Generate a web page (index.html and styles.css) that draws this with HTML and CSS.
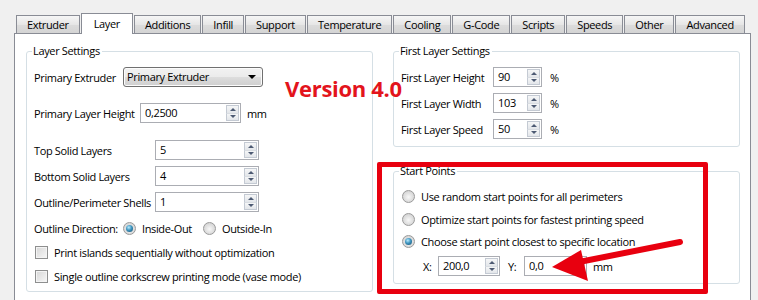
FILE: index.html
```html
<!DOCTYPE html>
<html>
<head>
<meta charset="utf-8">
<link rel="stylesheet" href="styles.css">
</head>
<body>
<div class="window">
  <div class="tabs">
    <div class="tab">Extruder</div>
    <div class="tab active">Layer</div>
    <div class="tab">Additions</div>
    <div class="tab">Infill</div>
    <div class="tab">Support</div>
    <div class="tab">Temperature</div>
    <div class="tab">Cooling</div>
    <div class="tab">G-Code</div>
    <div class="tab">Scripts</div>
    <div class="tab">Speeds</div>
    <div class="tab">Other</div>
    <div class="tab">Advanced</div>
  </div>
  <div class="pane">
    <fieldset class="group group-layer">
      <legend>Layer Settings</legend>
      <div class="row mt9">
        <span class="lbl lbl-extr">Primary Extruder</span>
        <div class="combo"><span class="combo-text">Primary Extruder</span><i class="caret"></i></div>
      </div>
      <div class="row mt16">
        <span class="lbl lbl-height">Primary Layer Height</span>
        <div class="spin w100"><span class="val">0,2500</span><span class="btns"><i class="up"></i><i class="dn"></i></span></div>
        <span class="unit">mm</span>
      </div>
      <div class="row mt17">
        <span class="lbl lbl-solid">Top Solid Layers</span>
        <div class="spin w103"><span class="val">5</span><span class="btns"><i class="up"></i><i class="dn"></i></span></div>
      </div>
      <div class="row mt6">
        <span class="lbl lbl-solid">Bottom Solid Layers</span>
        <div class="spin w103"><span class="val">4</span><span class="btns"><i class="up"></i><i class="dn"></i></span></div>
      </div>
      <div class="row mt6">
        <span class="lbl lbl-solid">Outline/Perimeter Shells</span>
        <div class="spin w103"><span class="val">1</span><span class="btns"><i class="up"></i><i class="dn"></i></span></div>
      </div>
      <div class="row mt6">
        <span class="lbl">Outline Direction:</span>
        <i class="radio checked dir-first"></i><span class="opt">Inside-Out</span>
        <i class="radio dir-second"></i><span class="opt">Outside-In</span>
      </div>
      <div class="row mt4">
        <i class="check"></i><span class="opt">Print islands sequentially without optimization</span>
      </div>
      <div class="row mt4">
        <i class="check"></i><span class="opt">Single outline corkscrew printing mode (vase mode)</span>
      </div>
    </fieldset>
    <div class="col-right">
      <fieldset class="group group-first">
        <legend>First Layer Settings</legend>
        <div class="row mt9">
          <span class="lbl lbl-first">First Layer Height</span>
          <div class="spin w48"><span class="val">90</span><span class="btns"><i class="up"></i><i class="dn"></i></span></div>
          <span class="unit pct">%</span>
        </div>
        <div class="row mt6">
          <span class="lbl lbl-first">First Layer Width</span>
          <div class="spin w48"><span class="val">103</span><span class="btns"><i class="up"></i><i class="dn"></i></span></div>
          <span class="unit pct">%</span>
        </div>
        <div class="row mt6">
          <span class="lbl lbl-first">First Layer Speed</span>
          <div class="spin w48"><span class="val">50</span><span class="btns"><i class="up"></i><i class="dn"></i></span></div>
          <span class="unit pct">%</span>
        </div>
      </fieldset>
      <fieldset class="group group-start">
        <legend>Start Points</legend>
        <div class="row mt8">
          <i class="radio sp"></i><span class="opt">Use random start points for all perimeters</span>
        </div>
        <div class="row mt3">
          <i class="radio sp"></i><span class="opt">Optimize start points for fastest printing speed</span>
        </div>
        <div class="row mt2">
          <i class="radio checked sp"></i><span class="opt">Choose start point closest to specific location</span>
        </div>
        <div class="row mt5 xy">
          <span class="lbl lbl-x">X:</span>
          <div class="spin w61"><span class="val">200,0</span><span class="btns"><i class="up"></i><i class="dn"></i></span></div>
          <span class="lbl lbl-y">Y:</span>
          <div class="spin w62"><span class="val">0,0</span><span class="btns"><i class="up"></i><i class="dn"></i></span></div>
          <span class="unit">mm</span>
        </div>
      </fieldset>
    </div>
  </div>
  <div class="version">Version 4.0</div>
  <div class="highlight"></div>
  <svg class="arrow" width="758" height="300" viewBox="0 0 758 300">
    <line x1="680" y1="242" x2="574" y2="263" stroke="#e8000f" stroke-width="6" stroke-linecap="round"/>
    <polygon points="552,267 581,250 588,281" fill="#e8000f"/>
  </svg>
</div>
</body>
</html>
```
FILE: styles.css
```css
* { box-sizing: border-box; }

body {
  margin: 0;
  background: #f0f0f0;
  font-family: "Open Sans", "Liberation Sans", sans-serif;
  font-size: 11px;
  letter-spacing: -0.35px;
  color: #000;
  overflow: hidden;
}

.window {
  position: relative;
  width: 758px;
  height: 300px;
  overflow: hidden;
}

/* Tabs */
.tabs {
  display: flex;
  align-items: flex-end;
  height: 33px;
  padding-left: 16px;
}

.tab {
  height: 18px;
  padding: 0 10px;
  margin-right: 1px;
  border: 1px solid #898c95;
  border-bottom: none;
  background: linear-gradient(#f6f6f6, #e6e6e6 50%, #dcdcdc 51%, #d4d4d4);
  line-height: 17px;
  white-space: nowrap;
}

.tab.active {
  position: relative;
  z-index: 1;
  height: 21px;
  margin-bottom: -1px;
  padding: 0 12px;
  background: #fff;
  line-height: 20px;
}

/* Pane */
.pane {
  display: flex;
  align-items: flex-start;
  gap: 20px;
  width: 737px;
  height: 290px;
  margin-left: 14px;
  padding: 10px 0 0 11px;
  border: 1px solid #898c95;
  background: #fff;
}

.group {
  margin: 0;
  min-width: 0;
  padding: 0 7px 5px;
  border: 1px solid #d5dfe5;
  border-radius: 3px;
}

.group legend {
  margin-left: -2px;
  padding: 0 2px 0 1px;
  line-height: 14px;
}

.group-layer { width: 347px; }

.col-right {
  display: flex;
  flex-direction: column;
  width: 347px;
}

.group-first { padding-bottom: 7px; }
.group-start { margin-top: 17px; padding-bottom: 7px; }

.row {
  display: flex;
  align-items: center;
  height: 20px;
  white-space: nowrap;
}

.mt2 { margin-top: 2px; }
.mt3 { margin-top: 3px; }
.mt4 { margin-top: 4px; }
.mt5 { margin-top: 5px; }
.mt6 { margin-top: 6px; }
.mt8 { margin-top: 8px; }
.mt9 { margin-top: 9px; }
.mt16 { margin-top: 16px; }
.mt17 { margin-top: 17px; }

.lbl { flex: none; }
.lbl-extr { width: 89px; }
.lbl-height { width: 106px; }
.lbl-solid { width: 121px; }
.lbl-first { width: 92px; }
.lbl-x { width: 15px; margin-left: 22px; }
.lbl-y { width: 16px; margin-left: 8px; }

.unit { margin-left: 6px; }
.unit.pct { margin-left: 8px; }

/* Combo box */
.combo {
  display: flex;
  align-items: center;
  width: 140px;
  height: 20px;
  border: 1px solid #707070;
  border-radius: 3px;
  background: linear-gradient(#f2f2f2, #ebebeb 50%, #dddddd 51%, #cfcfcf);
  box-shadow: inset 0 0 0 1px #fcfcfc;
}

.combo-text {
  flex: 1;
  margin: 2px;
  padding-left: 1px;
  line-height: 14px;
}

.caret {
  width: 0;
  height: 0;
  margin-right: 6px;
  border-left: 4px solid transparent;
  border-right: 4px solid transparent;
  border-top: 4px solid #000;
}

/* Spin box */
.spin {
  display: flex;
  height: 20px;
  border: 1px solid #abadb3;
  background: #fff;
}

.w48 { width: 49px; }
.w61 { width: 62px; }
.w62 { width: 63px; }
.w100 { width: 101px; }
.w103 { width: 104px; }

.val {
  flex: 1;
  padding-left: 4px;
  line-height: 18px;
}

.btns {
  display: flex;
  flex-direction: column;
  width: 15px;
  padding: 1px;
}

.btns i {
  flex: 1;
  display: flex;
  align-items: center;
  justify-content: center;
  border: 1px solid #c4cad3;
  background: linear-gradient(#f5f6f7, #e3e6ea);
}

.btns .up { border-bottom-color: #d9dde2; }
.btns .dn { border-top: none; }

.btns .up::before,
.btns .dn::before {
  content: "";
  width: 0;
  height: 0;
  border-left: 3px solid transparent;
  border-right: 3px solid transparent;
}

.btns .up::before { border-bottom: 3px solid #4d5a73; }
.btns .dn::before { border-top: 3px solid #4d5a73; }

/* Radio & check */
.radio {
  flex: none;
  width: 13px;
  height: 13px;
  border: 1px solid #9a9a9a;
  border-radius: 50%;
  background: radial-gradient(circle at 50% 55%, #f8f8f8 0, #e2e2e2 45%, #c9c9c9 100%);
  display: flex;
  align-items: center;
  justify-content: center;
}

.radio.checked::before {
  content: "";
  width: 7px;
  height: 7px;
  border-radius: 50%;
  background: radial-gradient(circle at 40% 35%, #b9ecff 0, #3e94bf 45%, #124a68 100%);
}

.dir-first { margin-left: 5px; }
.dir-second { margin-left: 11px; }
.sp { margin-left: 1px; }

.opt { margin-left: 6px; }

.check {
  flex: none;
  width: 13px;
  height: 13px;
  margin-left: 1px;
  border: 1px solid #8e8f8f;
  background: linear-gradient(135deg, #d6d6d6, #f7f7f7);
  box-shadow: inset 0 0 0 1px #f4f4f4;
}

/* Overlays */
.version {
  position: absolute;
  left: 285px;
  top: 73px;
  color: #e3141c;
  font-family: "Open Sans", "Liberation Sans", sans-serif;
  font-weight: 700;
  font-size: 22px;
  letter-spacing: -0.3px;
  line-height: 30px;
}

.highlight {
  position: absolute;
  left: 377px;
  top: 162px;
  width: 331px;
  height: 132px;
  border: 5px solid #e8000f;
  border-radius: 2px;
}

.arrow {
  position: absolute;
  left: 0;
  top: 0;
  pointer-events: none;
}
```
